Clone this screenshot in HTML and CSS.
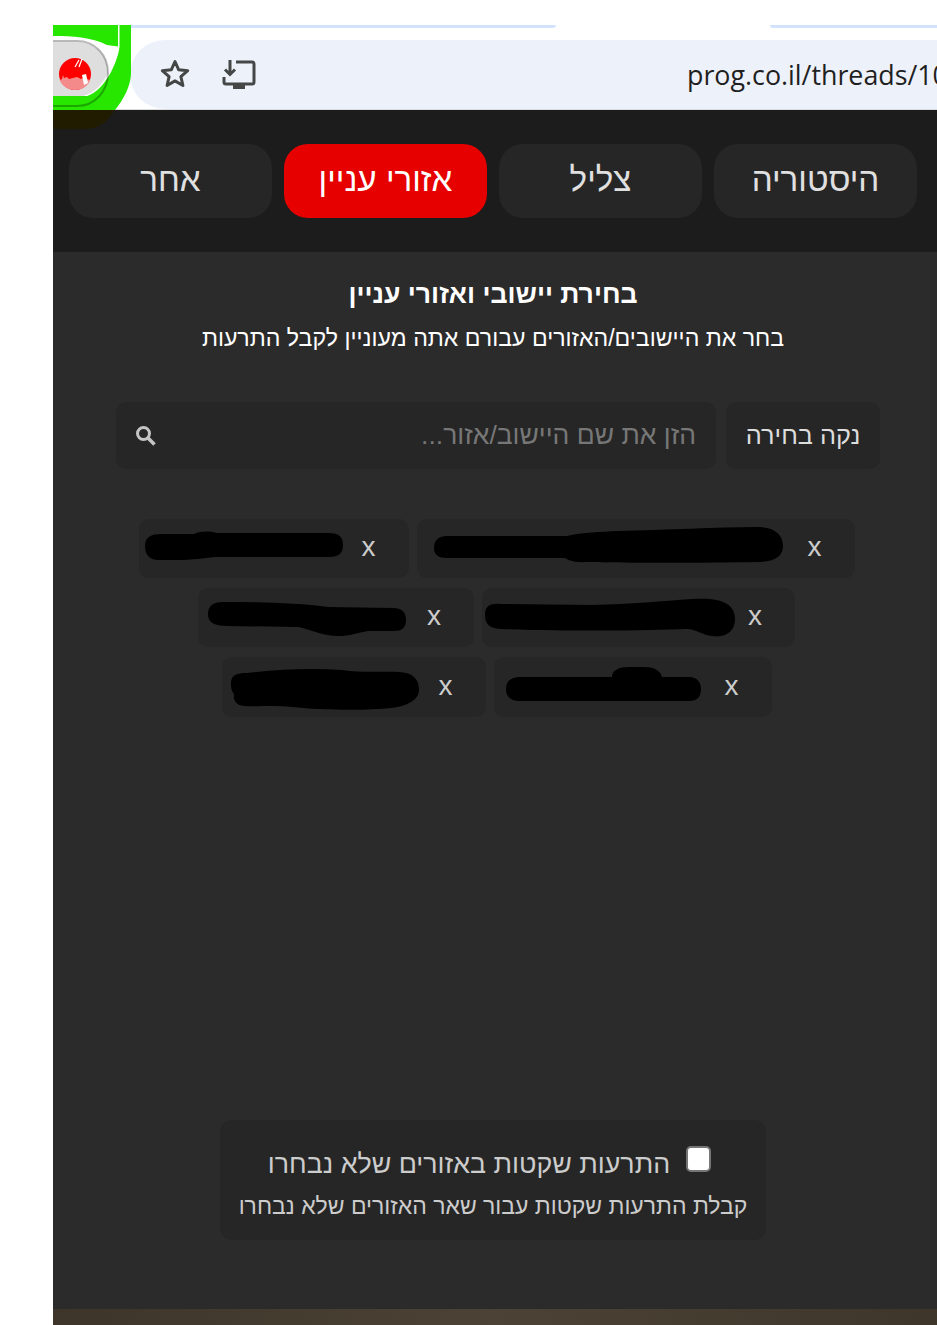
FILE: index.html
```html
<!DOCTYPE html>
<html lang="he">
<head>
<meta charset="utf-8">
<title>בחירת יישובי ואזורי עניין</title>
<link rel="stylesheet" href="styles.css">
</head>
<body>
<div class="page">
  <div class="browser">
    <div class="tabstrip">
      <div class="tabline tabline-a"></div>
      <div class="tabline tabline-b"></div>
    </div>
    <div class="toolbar">
      <div class="omnibox">
        <svg class="icon-star" width="32" height="32" viewBox="0 0 32 32"><path d="M16 3.500l3.700 8.300 9 .9-6.800 6 2 8.800L16 22.900l-7.900 4.600 2-8.800-6.800-6 9-.9z" fill="none" stroke="#444746" stroke-width="3" stroke-linejoin="round"/></svg>
        <svg class="icon-install" width="34" height="30" viewBox="0 0 34 30"><path d="M14 3H30a2 2 0 0 1 2 2V23a2 2 0 0 1-2 2H4a2 2 0 0 1-2-2V18" fill="none" stroke="#444746" stroke-width="3"/><path d="M8 1V15M3 10.500L8 15.500 13 10.500" fill="none" stroke="#444746" stroke-width="3"/><rect x="11" y="25" width="12" height="5" fill="#444746"/></svg>
        <span class="url">prog.co.il/threads/10</span>
      </div>
    </div>
  </div>

  <div class="app" dir="rtl">
    <nav class="tabs">
      <div class="tab">היסטוריה</div>
      <div class="tab">צליל</div>
      <div class="tab tab-active">אזורי עניין</div>
      <div class="tab">אחר</div>
    </nav>
    <main class="panel">
      <h1 class="title">בחירת יישובי ואזורי עניין</h1>
      <p class="subtitle">בחר את היישובים/האזורים עבורם אתה מעוניין לקבל התרעות</p>
      <div class="search-row">
        <button class="clear-btn" type="button">נקה בחירה</button>
        <div class="search-box">
          <input class="search-input" type="text" placeholder="הזן את שם היישוב/אזור...">
          <svg class="search-icon" width="22" height="22" viewBox="0 0 22 22"><circle cx="8.500" cy="8.500" r="6" fill="none" stroke="#c4c4c4" stroke-width="3"/><path d="M13 13L19.500 19.500" stroke="#c4c4c4" stroke-width="3.600"/></svg>
        </div>
      </div>
      <div class="chips">
        <div class="chip-row">
          <div class="chip"><span class="chip-x">x</span><svg class="redact" width="390" height="59" viewBox="0 0 390 59"><path d="M17 29C17 21 22 17 30 17L150 17C165 13 185 13 200 12C250 11 300 8 340 8C358 8 366 16 366 27C366 37 358 43 340 43C290 44 200 44 170 43C155 44 150 40 148 39L30 39C22 39 17 36 17 29Z"/></svg></div>
          <div class="chip"><span class="chip-x">x</span><svg class="redact" width="222" height="59" viewBox="0 0 222 59"><path d="M6 27C6 18 12 15 22 15L55 15C62 12 70 12 78 14L190 14C200 14 204 18 204 26C204 34 200 38 190 38L75 38C65 39 55 41 35 41L20 41C10 41 6 35 6 27Z"/></svg></div>
        </div>
        <div class="chip-row">
          <div class="chip"><span class="chip-x">x</span><svg class="redact" width="265" height="59" viewBox="0 0 265 59"><path d="M3 27C3 18 8 15 18 16L110 17C150 16 180 13 210 11C240 9 253 16 253 31C253 44 243 50 230 48C220 47 214 41 205 41C170 42 110 44 20 41C8 41 3 36 3 27Z"/></svg></div>
          <div class="chip"><span class="chip-x">x</span><svg class="redact" width="228" height="59" viewBox="0 0 228 59"><path d="M10 26C10 18 15 14 25 14C60 14 100 15 130 19L195 20C205 20 208 25 208 32C208 40 204 43 195 43L170 43C155 46 150 48 140 48C125 48 115 42 100 39L30 38C15 38 10 34 10 26Z"/></svg></div>
        </div>
        <div class="chip-row chip-row-tall">
          <div class="chip"><span class="chip-x">x</span><svg class="redact" width="230" height="59" viewBox="0 0 230 59"><path d="M12 31C12 23 17 19 27 19L118 19C118 12 125 9 135 9L150 9C162 9 167 14 168 19L195 19C203 19 207 24 207 31C207 39 203 43 195 43L27 43C17 43 12 39 12 31Z"/></svg></div>
          <div class="chip"><span class="chip-x">x</span><svg class="redact" width="216" height="59" viewBox="0 0 216 59"><path d="M9 25C9 17 15 15 25 15C60 11 90 10 120 12C140 15 160 13 178 14C192 15 197 22 197 32C197 42 185 48 170 50C140 53 100 52 70 49C50 47 35 49 22 48C14 47 11 42 12 36C9 32 9 29 9 25Z"/></svg></div>
        </div>
      </div>
      <div class="silent-card">
        <label class="silent-label"><input class="silent-check" type="checkbox"><span>התרעות שקטות באזורים שלא נבחרו</span></label>
        <p class="silent-desc">קבלת התרעות שקטות עבור שאר האזורים שלא נבחרו</p>
      </div>
    </main>
    <div class="footer-band"></div>
  </div>

  <svg class="ext-overlay" width="80" height="106" viewBox="0 0 80 106">
    <path d="M0 0H78V48C78 60 71 74 62 85L0 85Z" fill="#27e600"/>
    <path d="M0 85H62C56 93 50 104 32 104H0Z" fill="#211c00"/>
    <path d="M0 11C20 11 38 12 54 20L65 21.500V0H66.500V22C65 36 52 66 34 71H0Z" fill="#fff"/>
    <path d="M0 17H22C42 17 55 30 55 48C50 58 42 68 30 71H0Z" fill="#dedede"/>
    <path d="M0 16H24C42 16 55 30 55 48C55 66 42 81 24 81H0" fill="none" stroke="#000" stroke-opacity=".28" stroke-width="2"/>
    <circle cx="22" cy="49" r="16" fill="#ff0000"/>
    <path d="M6.800 55L9 54 10 50 11 53 14 52 16 54 20 53 24 52 28 54 30 53 37.200 55C35 61 29 65 22 65 15 65 9 61 6.800 55Z" fill="#f58a8a"/>
    <path d="M29 50L33 49 35 58 31 60Z" fill="#fff"/>
    <path d="M22 42L26 35M26 42L29 34" stroke="#fff" stroke-width="1.200" fill="none"/>
  </svg>
</div>
</body>
</html>
```

FILE: styles.css
```css
* { box-sizing: border-box; }
html, body { margin: 0; padding: 0; background: #fff; }
body { font-family: "Liberation Sans", sans-serif; }
.page { position: relative; width: 937px; height: 1325px; margin: 0; padding-left: 53px; overflow: hidden; }

.browser { background: #fff; }
.tabstrip { position: relative; height: 40px; }
.tabline { position: absolute; top: 25px; height: 3px; background: #d3e3fd; }
.tabline-a { left: 78px; width: 425px; border-bottom-right-radius: 10px; }
.tabline-b { left: 717px; right: 0; border-bottom-left-radius: 10px; }
.toolbar { height: 70px; border-bottom: 1px solid #dadce0; }
.omnibox { display: flex; align-items: center; height: 69px; margin-left: 77px; padding-left: 29px; background: #edf2fa; border-radius: 35px 0 0 35px; white-space: nowrap; }
.icon-star { flex: none; margin-top: -2px; }
.icon-install { flex: none; margin-left: 31px; margin-top: -2px; }
.url { margin-left: 431px; font-family: "Open Sans", sans-serif; font-size: 26.8px; color: #1f1f1f; }

.app { background: #2b2b2b; }
.tabs { display: grid; grid-template-columns: repeat(4, 203px); gap: 12px; height: 142px; padding: 34px 20px 34px 16px; background: #1c1c1c; }
.tab { display: flex; align-items: center; justify-content: center; height: 74px; padding-bottom: 2px; border-radius: 24px; background: #262626; color: #e0e0e0; font-size: 33.2px; }
.tab-active { background: #e60000; color: #fff; }

.panel { display: flex; flex-direction: column; align-items: center; height: 1057px; padding-right: 4px; }
.title { margin: 22px 0 0; font-size: 26.6px; line-height: 40px; font-weight: 700; color: #fff; }
.subtitle { margin: 6px 0 0; font-size: 23.15px; line-height: 36px; color: #fff; }
.search-row { display: flex; gap: 10px; margin-top: 46px; margin-inline-start: -10px; height: 67px; }
.clear-btn { width: 154px; border: 0; padding: 0; border-radius: 10px; background: #262626; color: #ddd; font: inherit; font-size: 25.3px; }
.search-box { display: flex; align-items: center; width: 600px; padding: 0 20px; border-radius: 10px; background: #262626; }
.search-input { flex: 1; min-width: 0; border: 0; outline: 0; background: transparent; color: #ddd; font: inherit; font-size: 26.5px; padding: 0; }
.search-input::placeholder { color: #777; opacity: 1; }
.search-icon { flex: none; margin-left: -1px; }

.chips { display: flex; flex-direction: column; gap: 10px; margin-top: 50px; margin-inline-start: -7px; width: calc(100% + 7px); }
.chip-row { display: flex; justify-content: center; gap: 8px; }
.chip { display: flex; height: 59px; align-items: center; border-radius: 10px; background: #262626; padding-inline-start: 32px; }
.chip-row-tall .chip { height: 60px; }
.chip-x { width: 16px; margin-top: -3px; text-align: center; font-size: 28px; line-height: 1; color: #ccc; }
.redact { display: block; flex: none; fill: #000; }

.silent-card { display: flex; flex-direction: column; align-items: center; width: 546px; height: 120px; margin-top: 403px; padding-top: 22px; border-radius: 12px; background: #262626; }
.silent-label { display: flex; align-items: center; gap: 16px; height: 40px; margin-inline-start: 7px; font-size: 26.8px; color: #ccc; }
.silent-label span { padding-top: 4px; }
.silent-check { appearance: none; width: 25px; height: 26px; margin: 0 0 6px; border: 2px solid #767676; border-radius: 5px; background: #fff; }
.silent-desc { margin: 9px 0 0; font-size: 23px; line-height: 30px; color: #ccc; }

.footer-band { height: 16px; background: linear-gradient(90deg, #3d352a, #4c4235 50%, #3e362b); }
.ext-overlay { position: absolute; left: 53px; top: 25px; }
```
